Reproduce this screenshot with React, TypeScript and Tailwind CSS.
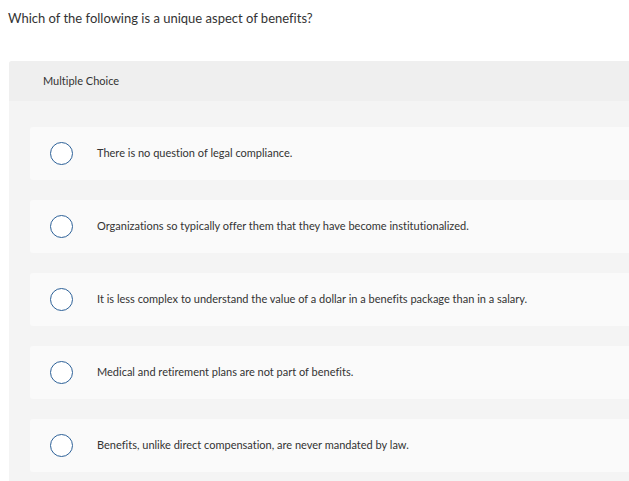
const options = [
  "There is no question of legal compliance.",
  "Organizations so typically offer them that they have become institutionalized.",
  "It is less complex to understand the value of a dollar in a benefits package than in a salary.",
  "Medical and retirement plans are not part of benefits.",
  "Benefits, unlike direct compensation, are never mandated by law.",
];

export default function App() {
  return (
    <main className="h-[481px] overflow-hidden bg-white font-['Lato','Liberation_Sans',sans-serif] text-[#333] [font-variant-ligatures:none]">
      <h1 className="pl-[8px] pt-[10px] text-[13px] leading-[16px]">
        Which of the following is a unique aspect of benefits?
      </h1>

      <section className="ml-[9px] mt-[35px] rounded-tl-[3px] bg-[#f4f4f4]">
        <div className="flex h-[40px] items-center rounded-tl-[3px] bg-[#efefef] pl-[34px] text-[11px]">
          Multiple Choice
        </div>

        <div className="flex flex-col gap-[20px] pl-[21px] pt-[26px] pb-[20px]">
          {options.map((o) => (
            <label
              key={o}
              className="flex h-[53px] items-center rounded-l-[3px] bg-[#fafafa] pl-[20px] text-[11px]"
            >
              <span className="h-[23px] w-[23px] shrink-0 rounded-full border-[1.5px] border-[#2d6198] bg-white" />
              <span className="ml-[24px]">{o}</span>
            </label>
          ))}
        </div>
      </section>
    </main>
  );
}
